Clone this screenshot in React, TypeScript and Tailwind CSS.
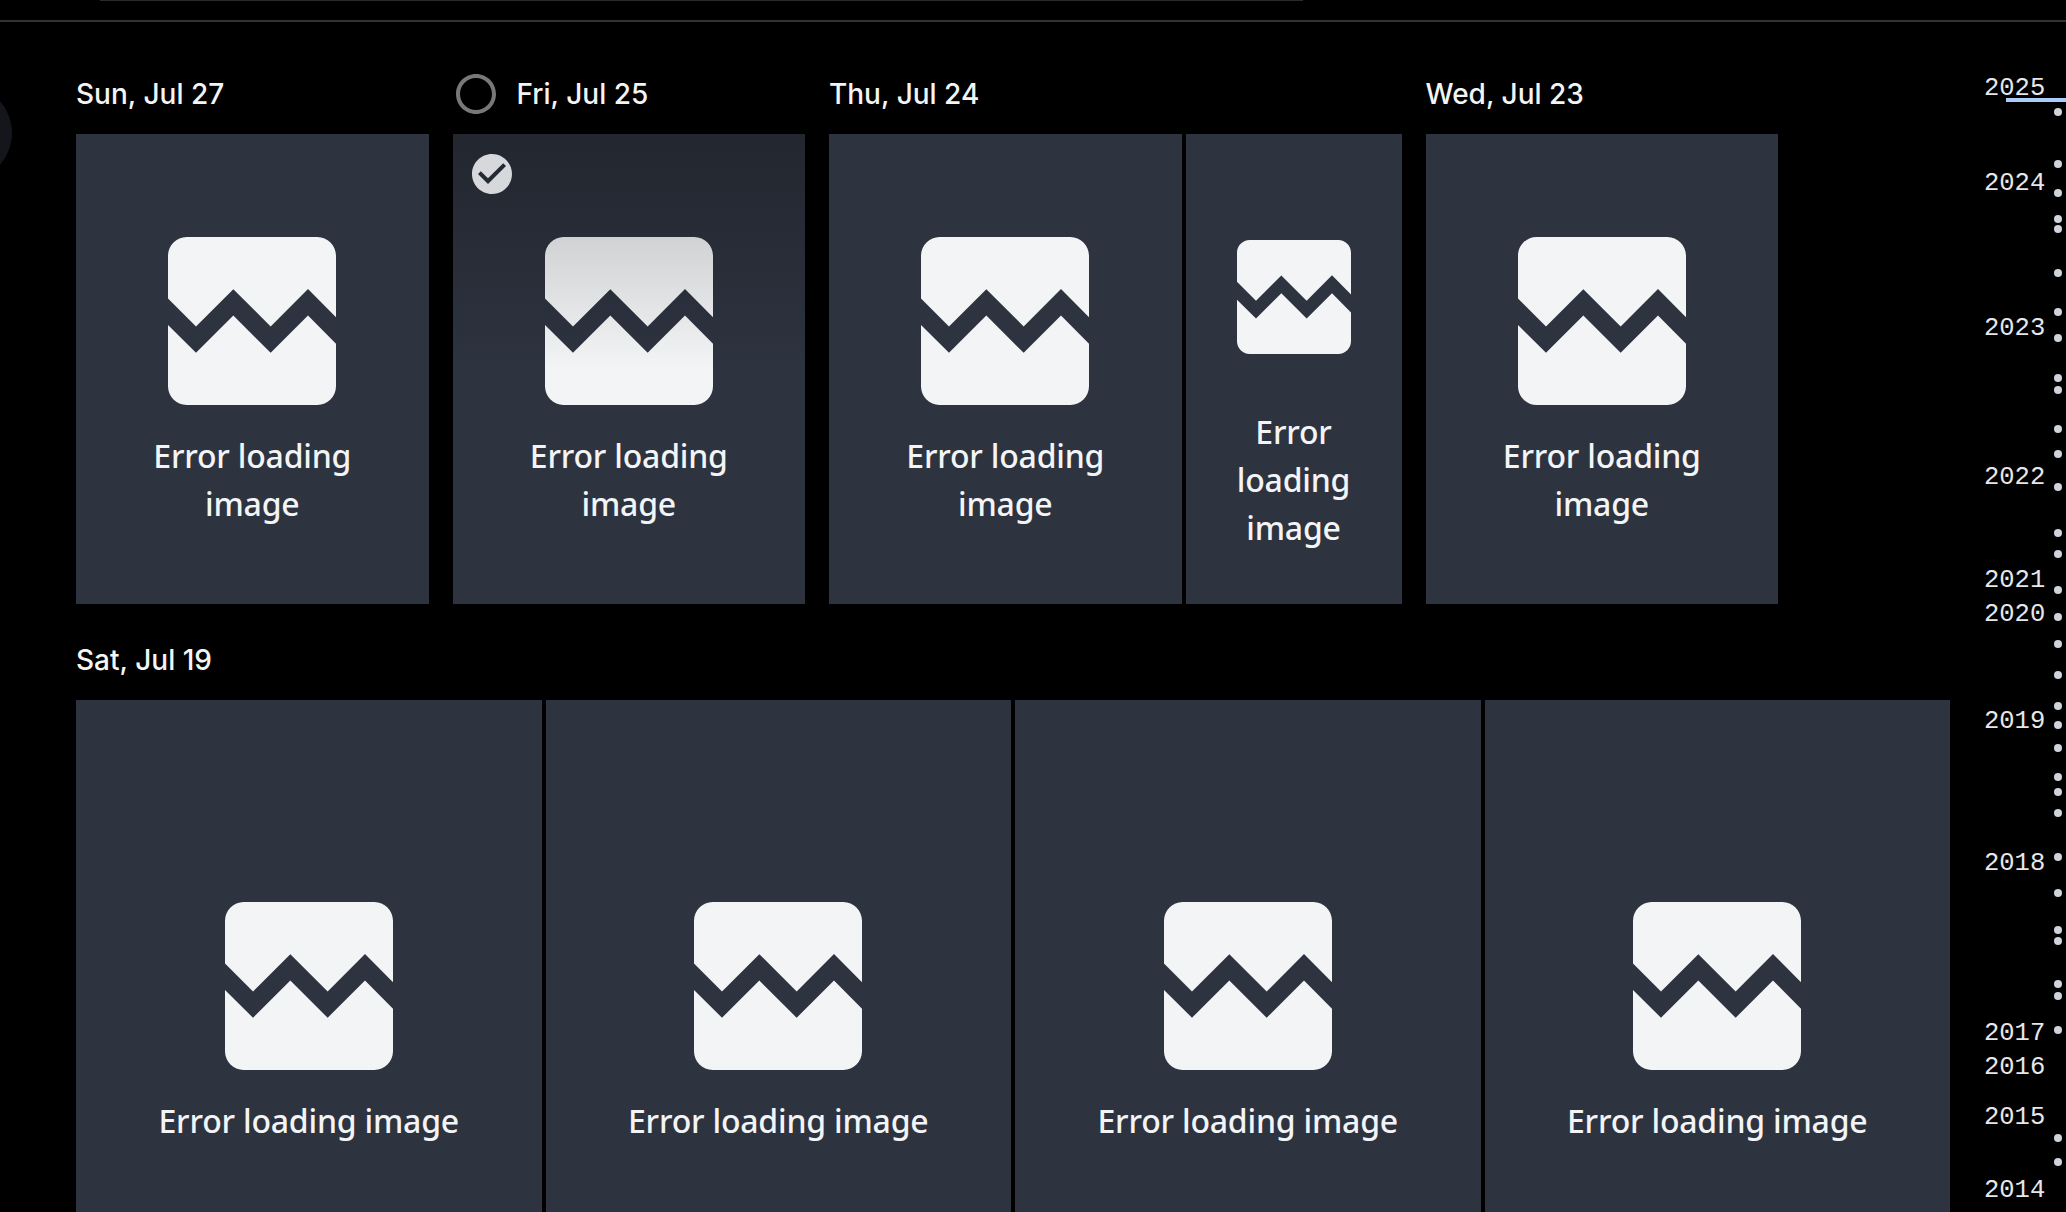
const BROKEN =
  "M21 5v6.59l-3-3.01-4 4.01-4-4-4 4-3-3.01V5c0-1.1.9-2 2-2h14c1.1 0 2 .9 2 2zm-3 6.42l3 3.01V19c0 1.1-.9 2-2 2H5c-1.1 0-2-.9-2-2v-6.58l3 2.99 4-4 4 4 4-3.99z";

const YEARS: [string, number][] = [
  ["2025", 89], ["2024", 184], ["2023", 329], ["2022", 478], ["2021", 581], ["2020", 615],
  ["2019", 722], ["2018", 864], ["2017", 1034], ["2016", 1068], ["2015", 1118], ["2014", 1191],
];
const DOTS = [
  112, 164, 193, 219, 229, 273, 312, 338, 378, 390, 429, 454, 487, 533, 554, 590, 617, 644, 675,
  706, 725, 748, 777, 792, 813, 857, 893, 930, 941, 984, 996, 1030, 1138, 1162,
];

function Tile({ width, selected }: { width?: string; selected?: boolean }) {
  return (
    <div className={`relative h-full shrink-0 flex flex-col items-center justify-center bg-[#2d333f] px-8 text-center text-[32px] font-medium leading-[48px] tracking-[-0.2px] text-gray-100 ${width ?? ""}`}>
      {selected && <div className="absolute inset-0 bg-linear-to-b from-black/25 to-transparent to-50%" />}
      <svg viewBox="0 0 24 24" className="h-[224px] w-[224px] max-w-full shrink-0" fill="currentColor">
        <path d={BROKEN} />
      </svg>
      <span className="-mt-px mb-px block w-full">Error loading image</span>
      {selected && (
        <svg viewBox="0 0 24 24" className="absolute left-[15px] top-4 h-12 w-12 text-[#d6d8dc]" fill="currentColor">
          <path d="M12 2C6.5 2 2 6.5 2 12S6.5 22 12 22 22 17.5 22 12 17.5 2 12 2M10 17L5 12L6.41 10.59L10 14.17L17.59 6.58L19 8L10 17Z" />
        </svg>
      )}
    </div>
  );
}

function DateLabel({ text, ring }: { text: string; ring?: boolean }) {
  return (
    <div className="flex h-20 items-center font-['Inter','Liberation_Sans',sans-serif] text-[28px] font-medium text-gray-100">
      {ring && (
        <svg viewBox="0 0 24 24" className="-ml-px mr-[17px] h-12 w-12 text-[#787878]" fill="currentColor">
          <path d="M12 20C7.58 20 4 16.42 4 12S7.58 4 12 4 20 7.58 20 12 16.42 20 12 20M12 2C6.48 2 2 6.48 2 12S6.48 22 12 22 22 17.52 22 12 17.52 2 12 2Z" />
        </svg>
      )}
      <span>{text}</span>
    </div>
  );
}

function Group({ text, ring, children }: { text: string; ring?: boolean; children: React.ReactNode }) {
  return (
    <div className="flex flex-col">
      <DateLabel text={text} ring={ring} />
      <div className="flex h-[470px] gap-1">{children}</div>
    </div>
  );
}

export default function App() {
  return (
    <div className="relative flex h-[1212px] w-[2066px] flex-col overflow-hidden bg-black font-['Noto_Sans','Liberation_Sans',sans-serif]">
      <header className="h-[22px] shrink-0 border-b-2 border-[#333333]">
        <div className="ml-[100px] h-px w-[1203px] bg-[#2a2a2a]" />
      </header>
      <div className="absolute left-[-84px] top-[85px] h-24 w-24 rounded-full bg-[#14161c]" />
      <div className="flex min-h-0 flex-1">
        <main className="w-[1950px] shrink-0 pl-[76px] pt-8">
          <div className="flex gap-6">
            <Group text="Sun, Jul 27"><Tile width="w-[352.5px]" /></Group>
            <Group text="Fri, Jul 25" ring><Tile width="w-[352.5px]" selected /></Group>
            <Group text="Thu, Jul 24">
              <Tile width="w-[352.5px]" />
              <Tile width="w-[216px]" />
            </Group>
            <Group text="Wed, Jul 23"><Tile width="w-[352.5px]" /></Group>
          </div>
          <div className="mt-4">
            <DateLabel text="Sat, Jul 19" />
            <div className="grid h-[620px] grid-cols-4 gap-1">
              <Tile />
              <Tile />
              <Tile />
              <Tile />
            </div>
          </div>
        </main>
        <aside className="relative flex-1" />
      </div>
      <div className="absolute right-0 top-[98px] h-1 w-[60px] bg-[#adcbfa]" />
      {YEARS.map(([y, top]) => (
        <span
          key={y}
          className="absolute left-[1984px] -translate-y-1/2 font-['Liberation_Mono',monospace] text-[25.5px] leading-8 text-gray-200"
          style={{ top }}
        >
          {y}
        </span>
      ))}
      {DOTS.map((top) => (
        <span key={top} className="absolute left-[2054px] h-2 w-2 -translate-y-1/2 rounded-full bg-[#cfd3dc]" style={{ top }} />
      ))}
    </div>
  );
}
